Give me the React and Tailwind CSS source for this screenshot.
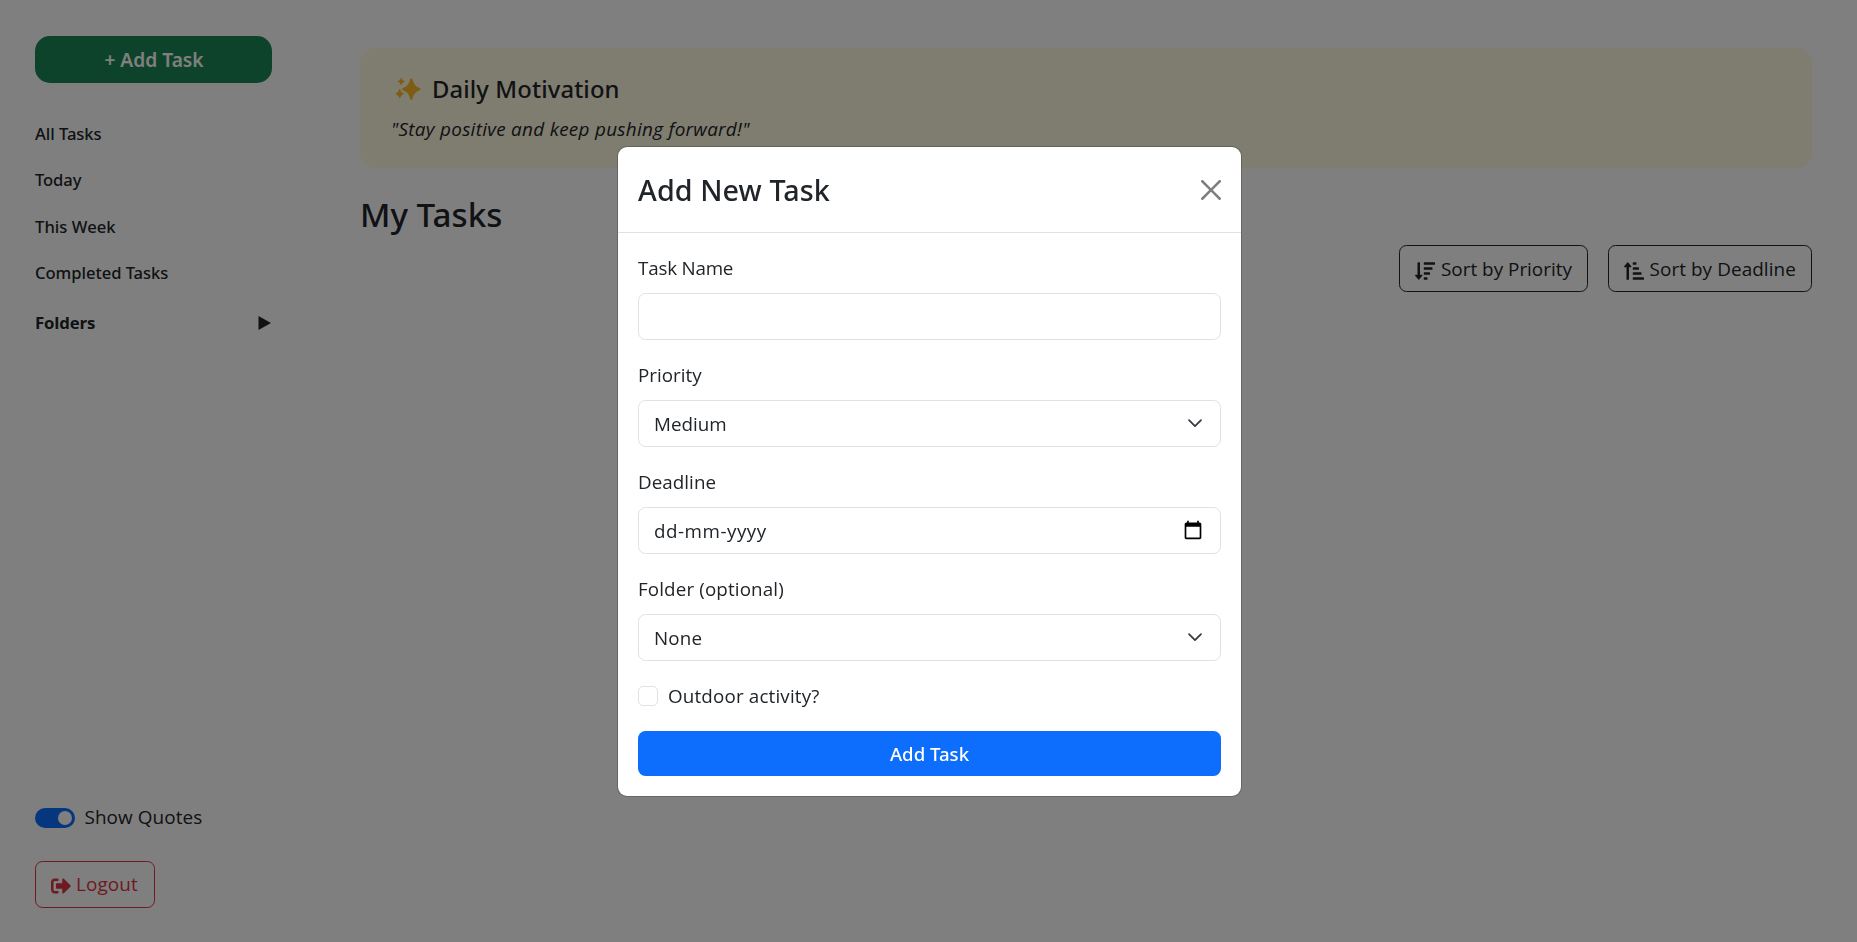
import React from 'react';
import { FaSortAmountDown, FaSortAmountUpAlt, FaSignOutAlt } from 'react-icons/fa';

const NAV = [
  { label: 'All Tasks', cls: 'tracking-[-0.05px]' },
  { label: 'Today', cls: 'tracking-[-0.1px]' },
  { label: 'This Week', cls: 'tracking-[0.05px]' },
  { label: 'Completed Tasks', cls: 'tracking-[-0.05px]' },
];

function Sparkles() {
  return (
    <svg viewBox="0 0 26 24" className="h-6 w-[26px]" fill="#fdb827">
      <path d="M16.3 1.4c.7 0 1 .5 1.3 1.3 1 4.200 2.700 6.500 6.700 8.100.8.3 1.200.7 1.200 1.300s-.4 1-1.200 1.300c-4 1.600-5.700 3.900-6.700 8.100-.3.8-.6 1.300-1.300 1.300s-1-.5-1.300-1.300c-1-4.200-2.700-6.500-6.700-8.100-.8-.3-1.200-.7-1.200-1.300s.4-1 1.200-1.300c4-1.600 5.700-3.900 6.700-8.100.3-.8.6-1.300 1.300-1.300z" />
      <path d="M6.200.8c.3 0 .5.2.6.600.4 1.300.9 1.900 2.200 2.400.3.1.5.300.5.600s-.2.500-.5.600c-1.300.5-1.800 1.100-2.200 2.400-.1.400-.3.600-.6.600s-.5-.2-.6-.6c-.4-1.300-.9-1.900-2.200-2.400-.3-.1-.5-.3-.5-.6s.2-.5.5-.6c1.300-.5 1.800-1.100 2.200-2.400.1-.4.3-.6.600-.6z" />
      <path d="M4.700 12.100c.3 0 .6.200.7.700.4 1.700 1.100 2.600 2.600 3.200.4.200.6.400.6.700s-.2.500-.6.700c-1.500.6-2.200 1.500-2.600 3.200-.1.500-.4.700-.7.700s-.6-.2-.7-.7c-.4-1.700-1.100-2.600-2.600-3.200-.4-.2-.6-.4-.6-.7s.2-.5.6-.7c1.500-.6 2.200-1.500 2.600-3.200.1-.5.4-.7.7-.7z" />
    </svg>
  );
}

function Sidebar() {
  return (
    <aside className="flex w-[307px] shrink-0 flex-col pb-[34.500px] pl-[35px] pr-[35px] pt-9 text-[#212529]">
      <button className="h-[47px] rounded-[15px] bg-[#198754] pl-px pt-px font-['Noto_Sans',sans-serif] text-[19.200px] leading-[46px] font-semibold text-white">
        + Add Task
      </button>
      <nav className="mt-[27px] flex flex-col font-['Noto_Sans',sans-serif] text-[16.600px] font-medium">
        {NAV.map((item) => (
          <a key={item.label} className={`py-[10.750px] leading-[25px] ${item.cls}`}>
            {item.label}
          </a>
        ))}
      </nav>
      <div className="mt-[14.700px] flex h-6 items-center justify-between text-[16.800px] font-bold tracking-[-0.15px]">
        <span>Folders</span>
        <svg viewBox="0 0 13 14" className="mr-px h-[14px] w-[13px]" fill="currentColor">
          <path d="M.5 0v14L13 7z" />
        </svg>
      </div>
      <div className="mt-auto flex h-[30px] items-center gap-[9.500px] text-[18.900px] tracking-[0.080px]">
        <span className="flex h-5 w-10 items-center justify-end rounded-full bg-[#0d6efd] pr-[3px]">
          <span className="size-[14px] rounded-full bg-white" />
        </span>
        <span>Show Quotes</span>
      </div>
      <button className="mt-[28px] flex h-[47px] w-[120px] items-center gap-[5px] rounded-[7.500px] border border-[#dc3545] pl-[15px] text-[18.900px] tracking-[0.1px] text-[#dc3545]">
        <FaSignOutAlt className="mt-[3px] size-5" />
        <span>Logout</span>
      </button>
    </aside>
  );
}

function Main() {
  return (
    <main className="flex flex-1 flex-col pl-[53px] pr-[45px] pt-12 text-[#212529]">
      <section className="h-[120px] rounded-[15px] bg-[#fff8e1] px-[31px] pt-[26px]">
        <div className="flex h-[30px] items-center gap-[11px] pl-[4px]">
          <Sparkles />
          <h5 className="font-['Noto_Sans',sans-serif] text-[23.800px] font-medium leading-[30px] tracking-[0.12px]">Daily Motivation</h5>
        </div>
        <p className="mt-[10px] text-[18.900px] italic leading-[30px] tracking-[0.29px]">
          "Stay positive and keep pushing forward!"
        </p>
      </section>
      <h2 className="mt-[26px] font-['Noto_Sans',sans-serif] text-[33.200px] font-medium leading-[42px]">My Tasks</h2>
      <div className="mt-[9px] flex justify-end gap-5 text-[18.900px]">
        <button className="flex h-[47px] w-[189px] items-center gap-[6px] rounded-[7.500px] border border-[#212529] pl-[15px]">
          <FaSortAmountDown className="mt-[5px] size-5" />
          <span className="whitespace-nowrap pt-px">Sort by Priority</span>
        </button>
        <button className="flex h-[47px] w-[204px] items-center gap-[5.500px] rounded-[7.500px] border border-[#212529] pl-[15px]">
          <FaSortAmountUpAlt className="mt-[5px] size-5" />
          <span className="whitespace-nowrap pt-px tracking-[0.080px]">Sort by Deadline</span>
        </button>
      </div>
    </main>
  );
}

function Chevron() {
  return (
    <svg viewBox="0 0 16 16" className="mb-px size-5" fill="none" stroke="#343a40" strokeWidth="1.400" strokeLinecap="round" strokeLinejoin="round">
      <path d="m3.200 5.700 4.800 4.800 4.800-4.800" />
    </svg>
  );
}

function CalendarIcon() {
  return (
    <svg viewBox="0 0 24 24" className="mb-px mr-[2px] size-5" fill="#000">
      <path d="M20 3h-1V1h-2v2H7V1H5v2H4c-1.100 0-2 .9-2 2v16c0 1.100.9 2 2 2h16c1.100 0 2-.9 2-2V5c0-1.100-.9-2-2-2zm0 18H4V8h16v13z" />
    </svg>
  );
}

function Field({ label, labelCls, value, valueCls, icon }) {
  return (
    <div className="mb-5">
      <div className={`mb-[10px] h-[30px] leading-[30px] ${labelCls}`}>{label}</div>
      <div className="flex h-[47px] items-center justify-between rounded-[7.500px] border border-[#dee2e6] pl-[15px] pr-[15px]">
        <span className={`pt-[2px] ${valueCls || ''}`}>{value}</span>
        {icon}
      </div>
    </div>
  );
}

function Modal() {
  return (
    <div className="fixed inset-0 flex items-start justify-center bg-black/50 pt-[146px]">
      <div className="ml-[2px] w-[625px] rounded-[10px] border border-black/20 bg-white bg-clip-padding text-[18.800px] text-[#212529]">
        <header className="flex h-[86px] items-center justify-between border-b border-[#dee2e6] px-5">
          <h4 className="font-['Noto_Sans',sans-serif] text-[28.700px] font-medium leading-[45px] tracking-[0.1px]">Add New Task</h4>
          <svg viewBox="0 0 16 16" className="size-5" fill="#000" opacity=".5">
            <path d="M.293.293a1 1 0 0 1 1.414 0L8 6.586 14.293.293a1 1 0 1 1 1.414 1.414L9.414 8l6.293 6.293a1 1 0 0 1-1.414 1.414L8 9.414l-6.293 6.293a1 1 0 0 1-1.414-1.414L6.586 8 .293 1.707a1 1 0 0 1 0-1.414z" />
          </svg>
        </header>
        <div className="p-5">
          <Field label="Task Name" labelCls="tracking-[-0.2px]" value="" />
          <Field label="Priority" labelCls="tracking-[0.020px]" value="Medium" valueCls="tracking-[0.020px]" icon={<Chevron />} />
          <Field label="Deadline" labelCls="tracking-[0.050px]" value="dd-mm-yyyy" valueCls="tracking-[0.520px]" icon={<CalendarIcon />} />
          <Field label="Folder (optional)" labelCls="tracking-[0.130px]" value="None" valueCls="tracking-[0.180px]" icon={<Chevron />} />
          <label className="mb-[19.500px] flex h-[30px] items-center gap-[10px] tracking-[0.170px]">
            <span className="size-5 rounded-[5px] border border-[#dee2e6]" />
            Outdoor activity?
          </label>
          <button className="block h-[45px] w-full rounded-[7.500px] bg-[#0d6efd] font-['Noto_Sans',sans-serif] text-[18.600px] leading-[45px] font-medium text-white">
            Add Task
          </button>
        </div>
      </div>
    </div>
  );
}

export default function App() {
  return (
    <div className="flex h-[942px] w-full overflow-hidden bg-white font-['Open_Sans','Noto_Sans',sans-serif]">
      <Sidebar />
      <Main />
      <Modal />
    </div>
  );
}
